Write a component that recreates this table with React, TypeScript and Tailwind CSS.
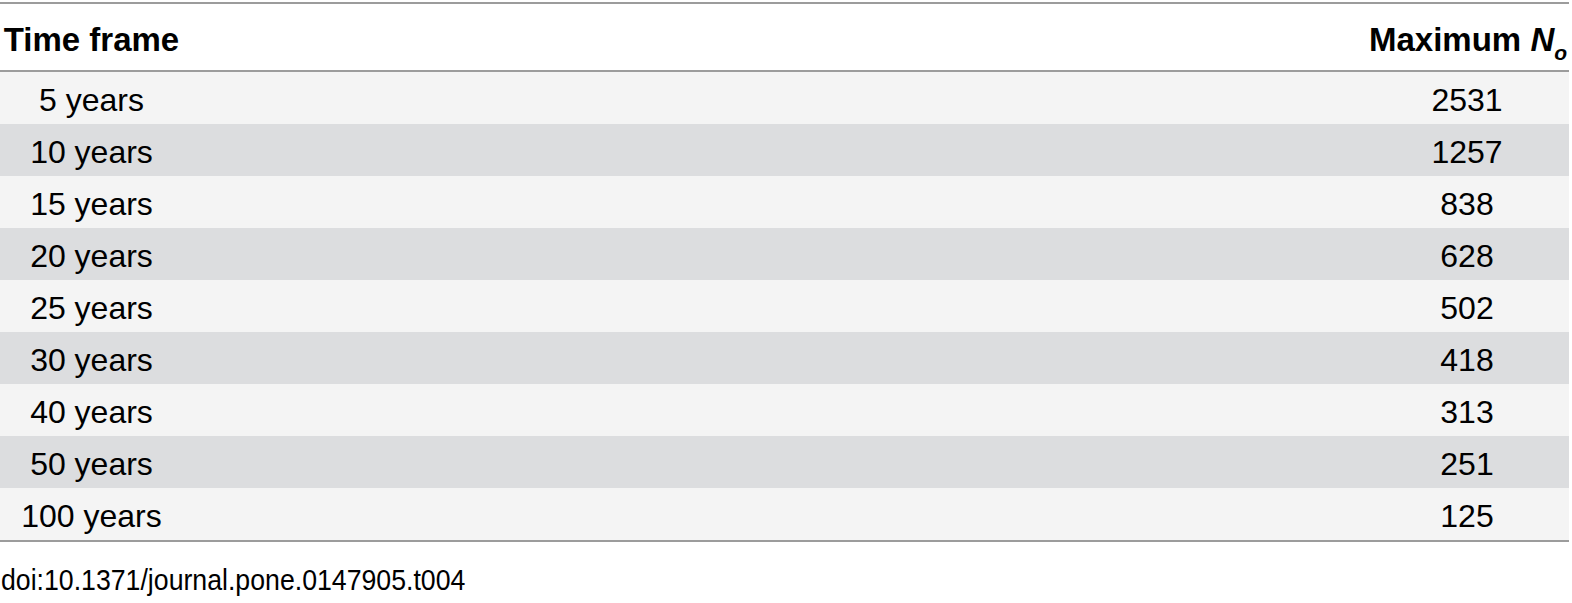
import React from "react";

const rows: [string, string][] = [
  ["5 years", "2531"],
  ["10 years", "1257"],
  ["15 years", "838"],
  ["20 years", "628"],
  ["25 years", "502"],
  ["30 years", "418"],
  ["40 years", "313"],
  ["50 years", "251"],
  ["100 years", "125"],
];

export default function App() {
  return (
    <div
      className="w-[1572px] h-[603px] bg-white text-black"
      style={{ fontFamily: '"Liberation Sans", Arial, sans-serif' }}
    >
      <div className="pt-[2px] w-[1569px]">
        <div className="border-t-2 border-b-2 border-[#9c9c9c]">
          <div className="grid grid-cols-[183px_1fr_196px_4px] h-[68px] items-center border-b-2 border-[#9c9c9c] text-[33px] font-bold leading-none">
            <div className="text-center pt-[4px]">Time frame</div>
            <div />
            <div className="text-right whitespace-nowrap pt-[4px] pr-[2px]">
              Maximum <i>N</i>
              <sub className="italic text-[21px] align-[-4px]">o</sub>
            </div>
            <div />
          </div>
          {rows.map(([t, n], i) => (
            <div
              key={t}
              className={`grid grid-cols-[183px_1fr_196px_4px] h-[52px] items-center text-[32px] leading-none ${
                i % 2 === 0 ? "bg-[#f4f4f4]" : "bg-[#dcdddf]"
              }`}
            >
              <div className="text-center pt-[4px]">{t}</div>
              <div />
              <div className="text-center pt-[4px]">{n}</div>
              <div />
            </div>
          ))}
        </div>
      </div>
      <div className="mt-[21px] pl-[1px]">
        <span className="inline-block origin-left scale-x-[0.92] text-[29px] leading-[34px] whitespace-nowrap">
          doi:10.1371/journal.pone.0147905.t004
        </span>
      </div>
    </div>
  );
}
